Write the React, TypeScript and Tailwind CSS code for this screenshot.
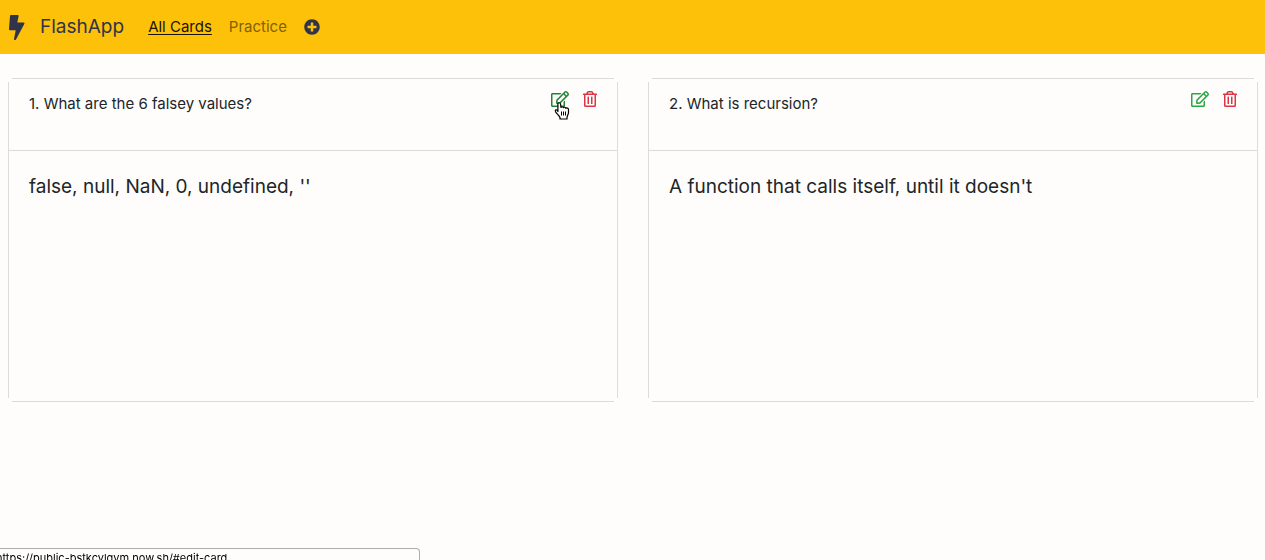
import { FaPlusCircle, FaRegEdit, FaRegTrashAlt } from "react-icons/fa";

type Card = { id: number; question: string; answer: string; active?: boolean };

const cards: Card[] = [
  { id: 1, question: "What are the 6 falsey values?", answer: "false, null, NaN, 0, undefined, ''", active: true },
  { id: 2, question: "What is recursion?", answer: "A function that calls itself, until it doesn't" },
];

function BoltLogo() {
  return (
    <svg className="h-[25px] w-[18px]" viewBox="0 0 18 25" aria-hidden="true">
      <path
        d="M2.900 0H9.600Q10.900 0 10.600 1.200L9.300 7.500H15.600Q17 7.700 16.300 9L8 24.400Q7.600 25 6.700 25 5.800 24.800 6 23.900L7.700 15.200H1.900Q.800 15 1 14L2 1Q2.100 0 2.900 0Z"
        fill="currentColor"
      />
    </svg>
  );
}

function HandCursor() {
  return (
    <svg
      className="pointer-events-none absolute top-3 left-[3px] h-[18px] w-[16px]"
      viewBox="0 0 16 18"
      aria-hidden="true"
    >
      <path
        d="M3.900 9.500V2C3.900.3 6.300.3 6.500 2L7 5.500C7.500 4.400 9 4.500 9.400 5.700 10 4.800 11.500 5.100 11.800 6.300 12.700 5.500 14.500 6.100 14.500 7.500V10.500C14.500 12.500 13.200 13.700 13 15.500V17H6V15.500C5.500 13.800 3.200 12.200 1.600 9.800.700 8.200 1.900 7 3.100 8.300Z"
        fill="#fff"
        stroke="#000"
        strokeWidth="1.2"
        strokeLinejoin="round"
      />
      <path d="M7.500 9.500v4M9.500 9.500v4M11.500 9.500v4" stroke="#000" strokeWidth="1" />
    </svg>
  );
}

function FlashCard({ card }: { card: Card }) {
  return (
    <article className="flex flex-col">
      <div className="mx-1 mb-[3px] border-t border-[#dcdcdb]" />
      <div className="border-x border-[#dcdcdb]">
        <header className="flex h-[69px] items-start justify-between border-b border-[#dcdcdb] pt-2 pr-5 pl-5">
          <h2 className="pt-[2px] text-[15px] leading-6">
            {card.id}. {card.question}
          </h2>
          <div className="flex gap-[14px]">
            <a
              href="#edit-card"
              aria-label="Edit card"
              className={card.active ? "relative text-[#1e8537]" : "relative text-[#28a745]"}
            >
              <FaRegEdit className="h-[18px] w-[18px]" />
              {card.active && <HandCursor />}
            </a>
            <button type="button" aria-label="Delete card" className="flex h-[18px] items-center text-[#dc3545]">
              <FaRegTrashAlt className="h-4 w-[14px]" />
            </button>
          </div>
        </header>
        <div className="min-h-[247px] px-5 pt-5">
          <p className="text-[19px] leading-8">{card.answer}</p>
        </div>
      </div>
      <div className="mx-1 mt-[3px] border-b border-[#dcdcdb]" />
    </article>
  );
}

export default function App() {
  return (
    <div className="min-h-screen bg-[#fefdfb] font-['Inter',sans-serif] text-[#212529]">
      <nav className="flex h-[54px] items-center bg-[#fdc10a] px-2 text-[#2f344b]">
        <a href="#home" className="flex items-center gap-[14px]">
          <BoltLogo />
          <span className="text-[19px] leading-[30px]">FlashApp</span>
        </a>
        <div className="ml-6 flex items-center gap-[17px] text-[15px] leading-6">
          <a href="#cards" className="text-[#191302] underline underline-offset-2">
            All Cards
          </a>
          <a href="#practice" className="text-[#7f6105]">
            Practice
          </a>
          <a href="#new-card" aria-label="Add card">
            <FaPlusCircle className="h-4 w-4" />
          </a>
        </div>
      </nav>
      <main className="grid grid-cols-2 gap-[30px] pt-6 pr-[7px] pl-2">
        {cards.map((card) => (
          <FlashCard key={card.id} card={card} />
        ))}
      </main>
      <div className="fixed bottom-0 left-0 h-3 w-[420px] overflow-hidden rounded-tr border-t border-r border-[#adadac] bg-[#fefdfb] text-[11px] leading-[18px] text-black">
        <span className="-ml-1 block whitespace-nowrap">https://public-bstkcylqym.now.sh/#edit-card</span>
      </div>
    </div>
  );
}
